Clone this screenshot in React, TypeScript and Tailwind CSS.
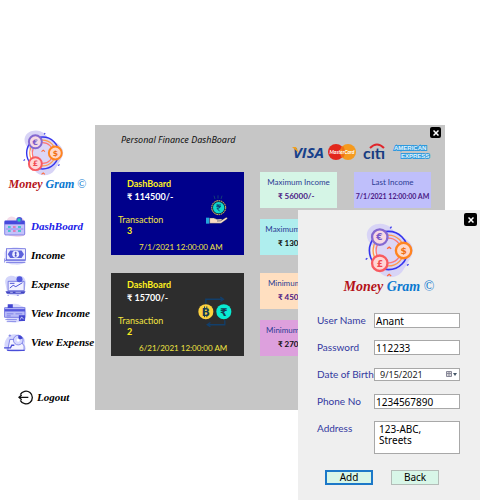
import React from "react";

const gothic = "font-['Lato','DejaVu_Sans',sans-serif]";
const serif = "font-['Liberation_Serif',serif]";
const tahoma = "font-['Noto_Sans',sans-serif]";

function BrandMark({ className }: { className: string }) {
  return (
    <svg viewBox="208 50 146 170" className={className} aria-hidden="true">
      <path
        d="M214 82C220 54 262 46 284 66c14 14 20 22 38 30c26 14 36 34 24 56c-10 18-16 30-26 44c-14 22-52 26-70 2c-12-16-14-34-8-52c6-22-34-30-28-64z"
        fill="#d8d4f6"
      />
      <circle cx="278" cy="135" r="57" fill="none" stroke="#3434ee" strokeWidth="5" />
      <circle cx="278" cy="135" r="46" fill="none" stroke="#ff9a4a" strokeWidth="4" />
      <circle cx="278" cy="135" r="37" fill="#dcd6f6" stroke="#f77" strokeWidth="4" />
      <circle cx="252" cy="95" r="23" fill="#f6d9e4" stroke="#8468d0" strokeWidth="7" />
      <circle cx="323" cy="135" r="23" fill="#ffd8c8" stroke="#ff8420" strokeWidth="7" />
      <circle cx="252" cy="173" r="23" fill="#ffd5d5" stroke="#f85a60" strokeWidth="7" />
      <g fontFamily="DejaVu Sans" fontWeight="bold" fontSize="27" textAnchor="middle">
        <text x="251" y="105" fill="#7858c8">€</text>
        <text x="323" y="145" fill="#f07010">$</text>
        <text x="252" y="183" fill="#f04a50">£</text>
      </g>
      <path d="M274 130l6-5 6 5M274 211l6-5 6 5" fill="none" stroke="#ff6a3a" strokeWidth="4" />
      <path d="M210 162l5-4M283 69l4-5M333 180l5-4" stroke="#3a3af0" strokeWidth="4" />
    </svg>
  );
}

function BrandName({ className }: { className: string }) {
  return (
    <p className={`${serif} ${className} whitespace-nowrap font-bold italic text-[#0a78d0]`}>
      <span className="text-[#b51218]">Money</span> Gram <span className="font-normal not-italic">©</span>
    </p>
  );
}

function CalendarIcon() {
  return (
    <svg viewBox="0 0 66 66" className="size-[22px]" aria-hidden="true">
      <path d="M8 14C12 0 28-2 36 8c12-8 26-2 26 10l2 36c-8 14-34 8-44 6C4 58 4 36 8 14z" fill="#f4dcea" />
      <rect x="2" y="15" width="60" height="42" rx="3" fill="#c3c2fa" stroke="#5b5be0" strokeWidth="2" />
      <path d="M2 14h60v11H2z" fill="#4548dc" />
      <circle cx="46" cy="12" r="9" fill="#5054dc" />
      <circle cx="45" cy="12" r="5" fill="#20d0b8" />
      <path d="M12 33h8M12 45h8M42 33h9M42 45h9" stroke="#20c8c0" strokeWidth="5" />
      <path d="M27 33h8M27 45h8" stroke="#e86aa8" strokeWidth="5" />
      <path d="M6 39h52" stroke="#7878e8" strokeWidth="2" />
    </svg>
  );
}

function CashIcon() {
  return (
    <svg viewBox="0 0 68 58" className="h-[20px] w-[24px]" aria-hidden="true">
      <path d="M4 26C0 10 20 4 34 4s34 2 32 20l-2 22c-8 10-24 8-34 8S2 48 4 26z" fill="#d6d7fb" />
      <rect x="9" y="8" width="55" height="32" fill="#eef" stroke="#5054d8" strokeWidth="2" />
      <path d="M20 13h33l7 11-7 11H20l-7-11z" fill="#5d62dc" />
      <circle cx="36" cy="24" r="10" fill="#eef" />
      <path d="M36 17v14M33 20h6M33 28h6" stroke="#4548c8" strokeWidth="3" />
      <path d="M5 42h60M8 48h56M4 36v12" stroke="#5a5edc" strokeWidth="2" />
    </svg>
  );
}

function LaptopIcon() {
  return (
    <svg viewBox="0 0 68 66" className="h-[22px] w-[23px]" aria-hidden="true">
      <path d="M4 30C-2 8 20 0 34 8c20-10 34 6 30 24l-4 26c-14 10-42 6-50 2z" fill="#d3d5fb" />
      <path d="M12 22h48v28H12z" fill="#f1f1ff" stroke="#4a4ed4" strokeWidth="2" />
      <path d="M4 52h60l-4 7H8z" fill="#4246c4" />
      <circle cx="46" cy="16" r="9" fill="#5258dc" />
      <path d="M17 42l10-8 8 4 20-12M17 28h14" fill="none" stroke="#5256d8" strokeWidth="3" />
      <path d="M18 55h8M34 55h16" stroke="#e8e8ff" strokeWidth="2" />
      <path d="M38 64h6M10 64h4" stroke="#5a5edc" strokeWidth="2" />
    </svg>
  );
}

function CardsIcon() {
  return (
    <svg viewBox="0 0 68 62" className="h-[21px] w-[23px]" aria-hidden="true">
      <path d="M6 18C14 0 40-2 50 8c18 4 18 24 14 40-10 12-50 12-56 2z" fill="#dadbfc" />
      <rect x="2" y="14" width="60" height="28" fill="#b9bbf8" stroke="#5458dc" strokeWidth="2" />
      <path d="M2 18h60v7H2z" fill="#5458dc" />
      <path d="M11 4h15v11H11zM44 36h18v17H44z" fill="#4246d0" />
      <path d="M8 32h20M34 32h20M8 38h12M4 49h34M8 55h28" stroke="#6468e0" strokeWidth="2" />
      <path d="M48 49l4-8 6 7" fill="none" stroke="#fff" strokeWidth="2" />
    </svg>
  );
}

function ReportIcon() {
  return (
    <svg viewBox="0 0 72 62" className="h-[20px] w-[24px]" aria-hidden="true">
      <path d="M4 44C0 26 14 4 34 4s38 10 32 30l4 16c-14 12-58 10-62 2z" fill="#d4d6fc" />
      <path d="M14 50l6-30h30l14 20v14H14z" fill="#f4f4ff" stroke="#5256dc" strokeWidth="2" />
      <circle cx="46" cy="22" r="15" fill="#d6d8ff" stroke="#5c60e0" strokeWidth="2" />
      <path d="M46 22V7a15 15 0 0 1 14 10z" fill="#4246d0" />
      <path d="M2 46h20l4-8h8M12 54h54" fill="none" stroke="#4a4ed8" strokeWidth="4" />
      <circle cx="46" cy="22" r="5" fill="#fff" />
      <path d="M16 8h8M20 4v8" stroke="#6468e0" strokeWidth="2" />
    </svg>
  );
}

const links = [
  { label: "DashBoard", icon: <CalendarIcon />, active: true },
  { label: "Income", icon: <CashIcon /> },
  { label: "Expense", icon: <LaptopIcon /> },
  { label: "View Income", icon: <CardsIcon /> },
  { label: "View Expense", icon: <ReportIcon /> },
];

function Sidebar() {
  return (
    <aside className="w-[95px] shrink-0 pt-1">
      <div className="flex w-[87px] flex-col items-center">
        <BrandMark className="h-[48px] w-[41px]" />
        <BrandName className="ml-2 text-[12px] leading-[14px]" />
      </div>
      <nav className={`${serif} mt-[21px] text-[11px] font-bold italic`}>
        {links.map((l) => (
          <a
            key={l.label}
            href="#"
            className={`flex h-[29px] items-center whitespace-nowrap ${l.active ? "text-[#2020e8]" : "text-black"}`}
          >
            <span className="mr-1 flex w-[27px] shrink-0 justify-center pl-[3px]">{l.icon}</span>
            {l.label}
          </a>
        ))}
        <a href="#" className="mt-8 flex items-center gap-1 pl-[18px] text-black">
          <svg viewBox="0 0 45 45" className="size-[15px]" fill="none" stroke="#111" strokeWidth="4" aria-hidden="true">
            <path d="M7 14A19 19 0 1 1 7 31M31 22H4M11 15l-8 7 8 7" />
          </svg>
          Logout
        </a>
      </nav>
    </aside>
  );
}

function CloseButton({ className }: { className: string }) {
  return (
    <button aria-label="Close" className={`flex items-center justify-center rounded-[2px] bg-black ${className}`}>
      <svg viewBox="0 0 12 12" className="size-[6px]" stroke="#fff" strokeWidth="3" aria-hidden="true">
        <path d="M1 1l10 10M11 1L1 11" />
      </svg>
    </button>
  );
}

function PaymentLogos() {
  return (
    <svg viewBox="0 0 140 20" className="h-[20px] w-[140px]" aria-hidden="true">
      <text x="2" y="15" fontFamily="Open Sans" fontStyle="italic" fontWeight="700" fontSize="15" fill="#17408a">
        VISA
      </text>
      <path d="M1 4h4l3 6z" fill="#f0a020" />
      <circle cx="45" cy="9" r="8" fill="#e2281c" />
      <circle cx="57" cy="9" r="8" fill="#f59a1e" />
      <path d="M51 4q3 5 0 10" fill="none" stroke="#f07018" strokeWidth="3" />
      <text x="51" y="11" textAnchor="middle" fontFamily="Lato" fontStyle="italic" fontWeight="700" fontSize="5" fill="#fff">
        MasterCard
      </text>
      <text x="72" y="16" fontFamily="Lato" fontWeight="700" fontSize="16" fill="#173c80">
        cıtı
      </text>
      <path d="M79 5q7-7 14 0" fill="none" stroke="#e0262c" strokeWidth="2" />
      <g fontFamily="Liberation Sans" fontWeight="bold" fontSize="6" fill="#e4f4fc" stroke="#2f9ade" strokeWidth="2" paintOrder="stroke">
        <text x="103" y="7">AMERICAN</text>
        <text x="110" y="15">EXPRESS</text>
      </g>
    </svg>
  );
}

function HandCoinIcon() {
  return (
    <svg viewBox="0 0 66 90" className="mr-1 h-[30px] w-[22px]" aria-hidden="true">
      <path d="M24 2l3 10M36 1v10M48 2l-3 10" stroke="#1c5a6c" strokeWidth="2" />
      <circle cx="38" cy="38" r="21" fill="#102c50" stroke="#f4cf4a" strokeWidth="3" strokeDasharray="5 2" />
      <circle cx="38" cy="38" r="17" fill="#10d8cc" />
      <path d="M31 30h14M31 35h14M33 30q11 2 7 9l-7 1 8 9" fill="none" stroke="#0b3b70" strokeWidth="3" />
      <path d="M0 68h10v18H0z" fill="#23a6dc" />
      <path d="M11 69h12l10 4 12-1c5 0 4 4 0 5l-12 1h10l16-10c5-2 7 2 3 5L45 85H11z" fill="#f9dcc4" stroke="#1b3550" strokeWidth="1" />
    </svg>
  );
}

function ExchangeIcon() {
  return (
    <svg viewBox="0 0 104 96" className="mr-2 h-[32px] w-[34px]" aria-hidden="true">
      <path d="M24 26V12h50M68 5l10 7-10 7M82 76v14H30M38 83l-10 7 10 6" fill="none" stroke="#123f6b" strokeWidth="4" />
      <circle cx="24" cy="50" r="23" fill="#fdd23e" />
      <circle cx="79" cy="50" r="23" fill="#09ead2" />
      <g fontFamily="DejaVu Sans" fontWeight="bold" fontSize="33" fill="#153c54" textAnchor="middle">
        <text x="24" y="62">B</text>
        <text x="79" y="62">₹</text>
      </g>
      <path d="M20 34v5M27 34v5M20 61v6M27 61v6" stroke="#153c54" strokeWidth="3" />
    </svg>
  );
}

function BalanceCard(props: { tone: string; amount: string; count: string; date: string; icon: React.ReactNode }) {
  return (
    <section className={`${gothic} ${props.tone} flex h-[83px] w-[133px] items-center text-[9px] leading-[13px] text-[#f0e442]`}>
      <div className="grid w-full grid-cols-[82px_1fr] pt-1">
        <div>
          <h2 className="pl-4 font-bold text-[#fff020]">DashBoard</h2>
          <p className="pl-4 font-bold text-white">₹ {props.amount}/-</p>
          <p className="mt-[10px] pl-[7px]">Transaction</p>
          <p className="h-[11px] pl-4 font-bold leading-[10px] text-[#fff020]">{props.count}</p>
        </div>
        <div className="flex items-center justify-center pt-1.5">{props.icon}</div>
        <p className="col-span-2 mt-1 whitespace-nowrap pl-7 text-[8px]">{props.date}</p>
      </div>
    </section>
  );
}

function StatCard({ tone, title, value, ink }: { tone: string; title: string; value: string; ink: string }) {
  const size = value.length > 12 ? "text-[7px] text-center" : "text-[8px] pl-[18px]";
  return (
    <section className={`${gothic} ${tone} h-[36px] w-[77px] pt-[3px] whitespace-nowrap`}>
      <h3 className="text-center text-[8px] leading-[14px] text-[#2c3c94]">{title}</h3>
      <p className={`${size} leading-[15px] font-bold ${ink}`}>{value}</p>
    </section>
  );
}

function Dashboard() {
  return (
    <main className="mr-[55px] h-[285px] min-w-0 flex-1 bg-[#c6c6c6]">
      <header className="h-[47px] pr-1">
        <div className="flex h-[18px] items-start justify-between pt-[2px] pl-[26px]">
          <h1 className={`${tahoma} pt-[6px] text-[9px] leading-[13px] italic text-[#111] whitespace-nowrap`}>Personal Finance DashBoard</h1>
          <CloseButton className="size-[11px]" />
        </div>
        <div className="flex justify-end pr-[10px]">
          <PaymentLogos />
        </div>
      </header>
      <div className="flex gap-4 pl-4">
        <div className="flex flex-col gap-[18px]">
          <BalanceCard tone="bg-[#00008b]" amount="114500" count="3" date="7/1/2021 12:00:00 AM" icon={<HandCoinIcon />} />
          <BalanceCard tone="bg-[#2d2d2d]" amount="15700" count="2" date="6/21/2021 12:00:00 AM" icon={<ExchangeIcon />} />
        </div>
        <div className="flex flex-col gap-[18px]">
          <div className="flex flex-col gap-[11px]">
            <div className="flex gap-[17px]">
              <StatCard tone="bg-[#d5f5e6]" title="Maximum Income" value="₹ 56000/-" ink="text-[#4b1a85]" />
              <StatCard tone="bg-[#bfbffb]" title="Last Income" value="7/1/2021 12:00:00 AM" ink="text-[#4b1a85]" />
            </div>
            <StatCard tone="bg-[#afeeee]" title="Maximum Expense" value="₹ 13000/-" ink="text-[#111]" />
          </div>
          <div className="flex flex-col gap-[11px]">
            <StatCard tone="bg-[#ffdfc0]" title="Minimum Income" value="₹ 4500/-" ink="text-[#4b1a85]" />
            <StatCard tone="bg-[#dda0dd]" title="Minimum Expense" value="₹ 2700/-" ink="text-[#111]" />
          </div>
        </div>
      </div>
    </main>
  );
}

const field = "h-[15px] w-full border border-[#a8a8a8] bg-white px-px text-[10px] leading-[13px] text-black outline-none";

function Row({ id, label, children }: { id: string; label: string; children: React.ReactNode }) {
  return (
    <div className="grid grid-cols-[57px_1fr] items-start">
      <label htmlFor={id} className={`${gothic} whitespace-nowrap text-[10px] leading-[15px] text-[#3238a0]`}>
        {label}
      </label>
      {children}
    </div>
  );
}

function ProfileDialog() {
  return (
    <div role="dialog" aria-label="User profile" className="absolute top-[210px] right-5 min-h-[290px] w-[182px] bg-[#efefef] pt-[3px]">
      <div className="flex justify-end pr-[3px]">
        <CloseButton className="size-[13px]" />
      </div>
      <div className="-mt-1 flex flex-col items-center">
        <BrandMark className="h-[57px] w-[49px]" />
        <BrandName className="text-[14px] leading-[16px]" />
      </div>
      <form className={`${tahoma} mt-[18px] flex flex-col gap-3 pr-5 pl-[19px]`}>
        <Row id="user" label="User Name">
          <input id="user" defaultValue="Anant" className={field} />
        </Row>
        <Row id="pass" label="Password">
          <input id="pass" defaultValue="112233" className={field} />
        </Row>
        <Row id="dob" label="Date of Birth">
          <div className="my-px flex h-[13px] items-center border border-[#a8a8a8] bg-white">
            <input id="dob" defaultValue="9/15/2021" className="h-[11px] w-[71px] bg-transparent pl-[5px] text-[9px] leading-[11px] text-[#222] outline-none" />
            <button type="button" aria-label="Open calendar" className="flex items-center">
              <svg viewBox="0 0 11 7" className="h-[7px] w-[11px]" aria-hidden="true">
                <path d="M.5.5h5v5h-5zM.5 2.5h5M3 .5v5" fill="#ddd" stroke="#889" strokeWidth="1" />
                <path d="M7 2h4l-2 3z" fill="#456" />
              </svg>
            </button>
          </div>
        </Row>
        <Row id="phone" label="Phone No">
          <input id="phone" defaultValue="1234567890" className={field} />
        </Row>
        <Row id="addr" label="Address">
          <textarea
            id="addr"
            defaultValue={"123-ABC,\nStreets"}
            className="block h-[33px] w-full resize-none overflow-hidden border border-[#a8a8a8] bg-white px-1 pt-[2px] text-[10px] leading-[11px] text-black outline-none"
          />
        </Row>
        <div className="mt-1 flex gap-[18px] pl-2 text-[10px] text-black">
          <button type="submit" className="h-[15px] w-[48px] border-2 border-[#1c78c8] bg-[#d8f6e8] leading-[11px]">
            Add
          </button>
          <button type="button" className="h-[15px] w-[48px] border border-[#b4bcb8] bg-[#d8f6e8] leading-[13px]">
            Back
          </button>
        </div>
      </form>
    </div>
  );
}

export default function App() {
  return (
    <div className="relative flex min-h-screen items-start bg-white pt-[125px]">
      <Sidebar />
      <Dashboard />
      <ProfileDialog />
    </div>
  );
}
